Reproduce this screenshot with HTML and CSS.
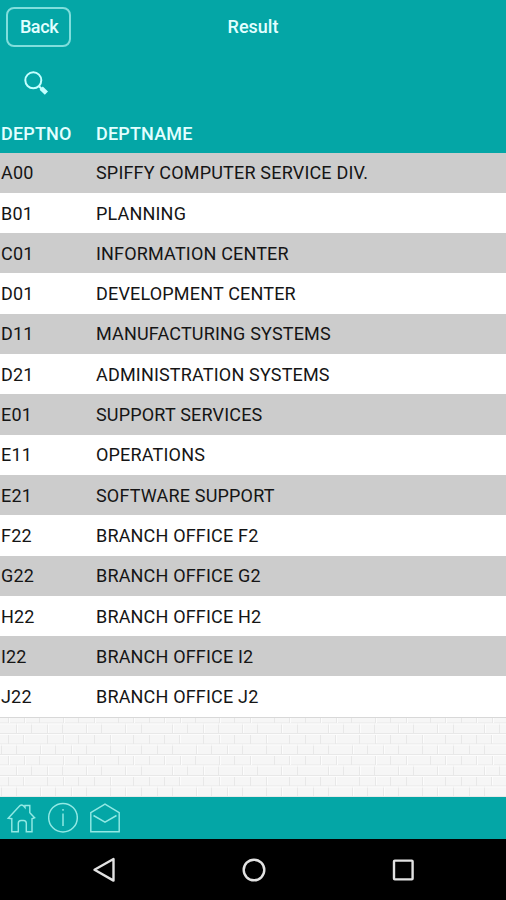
FILE: index.html
```html
<!DOCTYPE html>
<html lang="en">
<head>
<meta charset="utf-8">
<title>Result</title>
<link rel="stylesheet" href="styles.css">
</head>
<body>
<div class="app">
  <header class="header">
    <div class="titlebar">
      <button class="back">Back</button>
      <h1 class="title">Result</h1>
    </div>
    <div class="search">
      <svg width="28" height="28" viewBox="0 0 28 28" fill="none" stroke="#c4ffff">
        <circle cx="11.3" cy="10.3" r="8" stroke-width="2"/>
        <path d="M16.8 16l3 3" stroke-width="2"/>
        <path d="M19.2 18.2l5.2 5" stroke-width="4.6"/>
      </svg>
    </div>
  </header>
  <table class="table">
    <thead><tr><th class="no">DEPTNO</th><th>DEPTNAME</th></tr></thead>
    <tbody>
      <tr><td>A00</td><td>SPIFFY COMPUTER SERVICE DIV.</td></tr>
      <tr><td>B01</td><td>PLANNING</td></tr>
      <tr><td>C01</td><td>INFORMATION CENTER</td></tr>
      <tr><td>D01</td><td>DEVELOPMENT CENTER</td></tr>
      <tr><td>D11</td><td>MANUFACTURING SYSTEMS</td></tr>
      <tr><td>D21</td><td>ADMINISTRATION SYSTEMS</td></tr>
      <tr><td>E01</td><td>SUPPORT SERVICES</td></tr>
      <tr><td>E11</td><td>OPERATIONS</td></tr>
      <tr><td>E21</td><td>SOFTWARE SUPPORT</td></tr>
      <tr><td>F22</td><td>BRANCH OFFICE F2</td></tr>
      <tr><td>G22</td><td>BRANCH OFFICE G2</td></tr>
      <tr><td>H22</td><td>BRANCH OFFICE H2</td></tr>
      <tr><td>I22</td><td>BRANCH OFFICE I2</td></tr>
      <tr><td>J22</td><td>BRANCH OFFICE J2</td></tr>
    </tbody>
  </table>
  <div class="wall">
    <svg width="506" height="80">
      <defs>
        <pattern id="bricks" width="156" height="42" y="-6" patternUnits="userSpaceOnUse">
          <g fill="none" stroke="#e8e8e8">
            <path d="M0 .5H156M0 11H156M0 21.5H156M0 32H156"/>
            <path d="M8.5 0v11M24.5 0v11M39.5 0v11M63.5 0v11M78.5 0v11M94.5 0v11M118.5 0v11M133.5 0v11M149.5 0v11M16.5 11v10M31.5 11v10M47.5 11v10M62.5 11v10M86.5 11v10M101.5 11v10M125.5 11v10M141.5 11v10M8.5 21v11M23.5 21v11M47.5 21v11M63.5 21v11M78.5 21v11M94.5 21v11M110.5 21v11M133.5 21v11M149.5 21v11M1.5 32v10M16.5 32v10M40.5 32v10M55.5 32v10M71.5 32v10M86.5 32v10M110.5 32v10M125.5 32v10M141.5 32v10"/>
          </g>
          <path d="M0 1.5H156M0 12H156M0 22.5H156M0 33H156M9.5 1v10M25.5 1v10M64.5 1v10M95.5 1v10M134.5 1v10M17.5 12v9M48.5 12v9M87.5 12v9M126.5 12v9M24.5 22v9M64.5 22v9M111.5 22v9M41.5 33v9M72.5 33v9M126.5 33v9" stroke="#fcfcfc" fill="none"/>
        </pattern>
      </defs>
      <rect width="506" height="80" fill="url(#bricks)"/>
    </svg>
  </div>
  <footer class="toolbar">
    <svg width="30" height="32" viewBox="0 0 30 32"><path d="M2.2 17.2 14 4.6q1.6-1.4 3.2 0l1.8 2V4.5h4.8v7.2l4.8 5-2.6 1V30.8h-5.7v-8.5q0-2.8-2.8-2.8h-2.4q-2.8 0-2.8 2.8v8.5H5.8V17.7z"/></svg>
    <svg width="30" height="32" viewBox="0 0 30 32"><circle cx="15" cy="16.7" r="14.3"/><path d="M15 12.5v12.5M15 8v1.8"/></svg>
    <svg width="30" height="32" viewBox="0 0 30 32"><path d="M.8 11.7 15 3.2l14.2 8.5v19.1H.8zM3.5 14.5 15 21.2l11.5-6.7"/></svg>
  </footer>
  <nav class="navbar">
    <svg width="24" height="26" viewBox="0 0 24 26"><path d="M21.5 2v21.6L2.5 12.8z"/></svg>
    <svg width="24" height="26" viewBox="0 0 24 26"><circle cx="12" cy="13" r="10.3"/></svg>
    <svg width="24" height="26" viewBox="0 0 24 26"><rect x="3" y="3.6" width="18.6" height="18.8" rx=".8"/></svg>
  </nav>
</div>
</body>
</html>
```
FILE: styles.css
```css
* { box-sizing: border-box; }
body { margin: 0; font-family: Roboto, "Liberation Sans", sans-serif; }
.app { width: 506px; height: 900px; display: flex; flex-direction: column; overflow: hidden; background: #f6f6f6; }
.header { background: #04a6a6; height: 114.6px; flex: none; }
.titlebar { display: grid; grid-template-columns: 70px 1fr 70px; align-items: center; height: 54px; }
.back { margin: 0 0 1px 6px; width: 65px; height: 40px; padding: 0 0 0 1px; border: 2px solid #80dedc; border-radius: 8px; background: none; color: #e2ffff; font: 500 18px Roboto, sans-serif; letter-spacing: -.4px; }
.title { margin: 0 0 1px; text-align: center; color: #e2ffff; font-size: 18px; font-weight: 500; }
.search { padding: 16px 0 0 22px; }
.search svg { display: block; }
.table { width: 100%; flex: none; border-collapse: collapse; table-layout: fixed; font-size: 18px; letter-spacing: .18px; color: #151515; }
.table tr { height: 40.3px; }
.table thead tr { height: 38px; background: #04a6a6; color: #e2ffff; }
.table th, .table td { padding: 0 0 0 1px; text-align: left; white-space: nowrap; }
.table th { font-weight: 500; }
.no { width: 95px; }
.table tbody tr { background: #fff; }
.table tbody tr:nth-child(odd) { background: #ccc; }
.wall { flex: 1; min-height: 0; overflow: hidden; background: #f6f6f6; border-top: 1px solid #d8d8d8; }
.toolbar { height: 42px; flex: none; background: #04a6a6; display: flex; gap: 12px; padding: 4px 0 0 6px; }
.toolbar svg { fill: none; stroke: #92e9e4; stroke-width: 1.45; }
.navbar { height: 61px; flex: none; background: #000; display: flex; align-items: center; justify-content: space-between; padding: 0 91px 0 92px; }
.navbar svg { fill: none; stroke: #e2e2e2; stroke-width: 2.4; stroke-linejoin: round; }
```
